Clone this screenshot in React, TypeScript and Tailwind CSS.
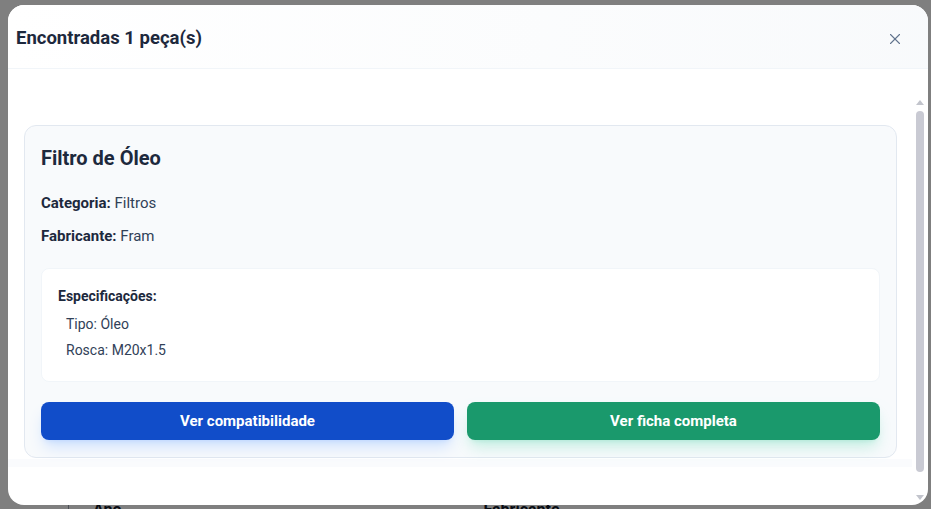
import { X } from 'lucide-react'

const specs = [
  { label: 'Tipo', value: 'Óleo' },
  { label: 'Rosca', value: 'M20x1.5' },
]

export default function App() {
  return (
    <div className="relative h-[509px] w-[931px] overflow-hidden bg-white font-['Roboto',sans-serif]">
      {/* page behind the overlay */}
      <div className="absolute left-0 top-[498px] flex w-full">
        <div className="ml-[68px] h-8 border-l border-gray-400" />
        <span className="ml-6 text-base font-bold text-gray-900">Ano</span>
        <span className="ml-[362px] text-base font-bold text-gray-900">Fabricante</span>
      </div>
      <div className="absolute inset-0 bg-black/50" />

      {/* modal */}
      <div className="absolute left-2 top-[5px] flex h-[500px] w-[920px] flex-col overflow-hidden rounded-2xl bg-white">
        <div className="flex h-16 shrink-0 items-center justify-between border-b border-slate-100 bg-gradient-to-r from-white to-slate-50 pl-2 pr-6 pt-[4px]">
          <h2 className="text-[18.5px] font-bold text-slate-800">Encontradas 1 peça(s)</h2>
          <button className="text-slate-500">
            <X size={18} strokeWidth={1.5} />
          </button>
        </div>

        <div className="flex min-h-0 flex-1 pt-[26px]">
          <div className="min-h-0 flex-1 overflow-hidden">
            <div className="pl-4 pr-[15px] pt-[30px]">
              <div className="rounded-xl border border-slate-200 bg-slate-50 px-4 pb-[17px] pt-[18px]">
                <h3 className="text-xl font-bold text-slate-800">Filtro de Óleo</h3>
                <p className="mt-[20px] text-[15px] text-slate-700">
                  <span className="font-bold text-slate-800">Categoria:</span> Filtros
                </p>
                <p className="mt-[10px] text-[15px] text-slate-700">
                  <span className="font-bold text-slate-800">Fabricante:</span> Fram
                </p>
                <div className="mt-[21px] rounded-lg border border-slate-100 bg-white px-4 pb-[21px] pt-[17px]">
                  <p className="text-sm font-bold text-slate-800">Especificações:</p>
                  <ul className="mt-[8px] space-y-[6px] pl-2">
                    {specs.map(s => (
                      <li key={s.label} className="text-sm text-slate-700">
                        {s.label}: {s.value}
                      </li>
                    ))}
                  </ul>
                </div>
                <div className="mt-[20px] grid grid-cols-2 gap-[13px]">
                  <button className="h-[38px] rounded-lg bg-[#114dc9] text-[15px] font-bold text-white shadow-lg shadow-blue-500/20">
                    Ver compatibilidade
                  </button>
                  <button className="h-[38px] rounded-lg bg-[#1a996c] text-[15px] font-bold text-white shadow-lg shadow-emerald-500/20">
                    Ver ficha completa
                  </button>
                </div>
              </div>
            </div>
            <div className="mt-[1px] h-2 bg-slate-50/70" />
          </div>

          {/* scrollbar */}
          <div className="flex w-[16px] shrink-0 flex-col items-center pb-[4px] pt-[4px]">
            <svg width="10" height="6" viewBox="0 0 10 6" className="shrink-0">
              <path d="M1 6 L5 1 L9 6 Z" fill="#c2c4cc" />
            </svg>
            <div className="mb-[23px] mt-[6px] w-[8px] flex-1 rounded-full bg-[#c9cad3]" />
            <svg width="10" height="6" viewBox="0 0 10 6" className="shrink-0">
              <path d="M1 0 L5 5 L9 0 Z" fill="#c2c4cc" />
            </svg>
          </div>
        </div>
      </div>
    </div>
  )
}
